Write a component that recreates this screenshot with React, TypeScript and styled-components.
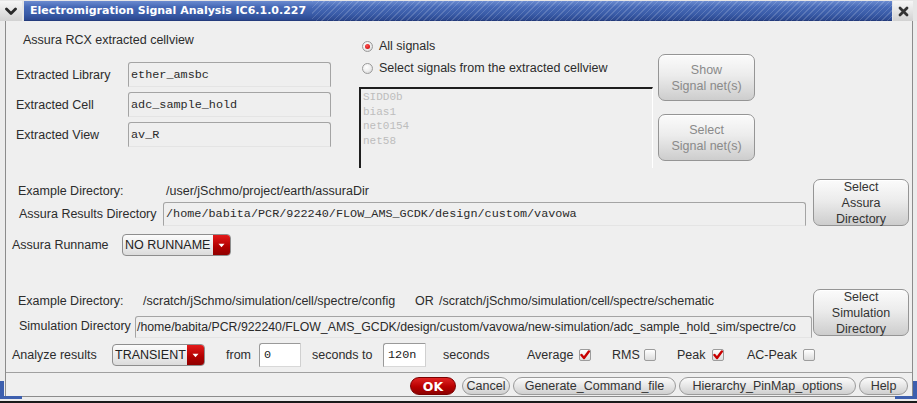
import React from "react";
import styled, { createGlobalStyle } from "styled-components";

const SANS = `"Liberation Sans", Arial, sans-serif`;
const MONO = `"Liberation Mono", "Courier New", monospace`;

const Global = createGlobalStyle`
  html, body { margin: 0; padding: 0; background: #efefef; }
  * { box-sizing: border-box; }
`;

const Window = styled.div`
  position: relative;
  width: 917px;
  height: 403px;
  display: flex;
  flex-direction: column;
  background: #ececec;
  border-bottom: 2px solid #1a1a1a;
  overflow: hidden;
  font-family: ${SANS};
  font-size: 12.5px;
  color: #2c2c2c;
`;

const TitleBar = styled.div`
  flex: none;
  height: 21px;
  display: flex;
  padding-top: 1px;
  background: #e6e6e6;
`;

const WinButton = styled.div<{ $w: number; $ml?: number }>`
  width: ${(p) => p.$w}px;
  height: 20px;
  margin-left: ${(p) => p.$ml ?? 0}px;
  background: linear-gradient(#f6f6f6, #d2d2d2);
  display: flex;
  align-items: center;
  justify-content: center;
`;

const barBg = `linear-gradient(#6b8bd0 0%, #4669b6 30%, #3a5ca8 65%, #2b4890 95%, #1d2f68 100%)`;

const Bar = styled.div`
  flex: 1;
  height: 20px;
  margin-left: 2px;
  display: flex;
  background: repeating-linear-gradient(135deg, rgba(255, 255, 255, 0.16) 0 1px, transparent 1px 4px), ${barBg};
`;

const TitleText = styled.div`
  height: 20px;
  line-height: 20px;
  padding: 0 6px 0 6px;
  background: ${barBg};
  color: #ffffff;
  font-family: "DejaVu Sans", ${SANS};
  font-weight: bold;
  font-size: 11px;
  white-space: nowrap;
`;

const Body = styled.div`
  flex: 1;
  margin: 0 4px 4px 5px;
  border-left: 1px solid #8c8c8c;
  border-right: 1px solid #8c8c8c;
  border-bottom: 1px solid #8c8c8c;
  background: #efefef;
  display: flex;
  flex-direction: column;
  min-height: 0;
`;

const TopSection = styled.div`
  display: flex;
  height: 158px;
  flex: none;
`;

const LeftCol = styled.div`
  width: 353px;
  display: flex;
  flex-direction: column;
`;

const SectionTitle = styled.div`
  margin: 12px 0 0 17px;
  line-height: 14px;
`;

const FieldList = styled.div`
  margin-top: 15px;
  display: flex;
  flex-direction: column;
  gap: 5px;
`;

const Row = styled.div<{ $h: number; $pl: number; $mt?: number }>`
  display: flex;
  align-items: center;
  height: ${(p) => p.$h}px;
  padding-left: ${(p) => p.$pl}px;
  margin-top: ${(p) => p.$mt ?? 0}px;
  flex: none;
  white-space: nowrap;
`;

const Slot = styled.div<{ $w: number }>`
  width: ${(p) => p.$w}px;
  flex: none;
  display: flex;
  align-items: center;
  white-space: nowrap;
`;

const ReadField = styled.div<{ $w: number; $h: number; $mono?: boolean; $self?: string }>`
  width: ${(p) => p.$w}px;
  height: ${(p) => p.$h}px;
  flex: none;
  align-self: ${(p) => p.$self ?? "center"};
  border: 1px solid #a4a4a4;
  border-bottom-color: #e4e4e4;
  border-radius: 3px 3px 0 0;
  background: #efefef;
  padding-left: ${(p) => (p.$mono ? 2 : 1)}px;
  display: flex;
  align-items: center;
  overflow: hidden;
  white-space: nowrap;
  font-family: ${(p) => (p.$mono ? MONO : SANS)};
  font-size: ${(p) => (p.$mono ? "11.8px" : "12.3px")};
  color: #2a2a2a;
`;

const EditField = styled.div<{ $w: number }>`
  width: ${(p) => p.$w}px;
  height: 24px;
  flex: none;
  border: 1px solid #9a9a9a;
  border-right-color: #d0d0d0;
  border-bottom-color: #d8d8d8;
  border-radius: 3px 0 0 0;
  background: #ffffff;
  padding-left: 4px;
  display: flex;
  align-items: center;
  font-family: ${MONO};
  font-size: 11.8px;
  color: #222;
`;

const MiddleCol = styled.div`
  width: 299px;
  padding-top: 15px;
  display: flex;
  flex-direction: column;
  gap: 2px;
`;

const RadioRow = styled.div`
  height: 20px;
  display: flex;
  align-items: center;
  gap: 6px;
  padding-left: 3px;
  white-space: nowrap;
`;

const RadioDot = styled.div<{ $on?: boolean }>`
  width: 11px;
  height: 11px;
  border-radius: 50%;
  border: 1px solid #9a9a9a;
  background: radial-gradient(circle at 40% 35%, #ffffff 0%, #f0f0f0 45%, #cfcfcf 100%);
  display: flex;
  align-items: center;
  justify-content: center;
  &::after {
    content: "";
    display: ${(p) => (p.$on ? "block" : "none")};
    width: 5px;
    height: 5px;
    border-radius: 50%;
    background: radial-gradient(circle at 40% 35%, #ff5050, #c00000);
  }
`;

const ListBox = styled.div`
  margin-top: 7px;
  width: 294px;
  height: 81px;
  border-top: 2px solid #1e1e1e;
  border-left: 2px solid #1e1e1e;
  border-right: 1px solid #ffffff;
  padding: 1px 0 0 2px;
  font-family: ${MONO};
  font-size: 11px;
  line-height: 14.5px;
  color: #bdbdbd;
`;

const RightCol = styled.div`
  padding-top: 33px;
  display: flex;
  flex-direction: column;
  gap: 13px;
`;

const PanelButton = styled.div<{ $disabled?: boolean; $w?: number }>`
  width: ${(p) => p.$w ?? 97}px;
  height: 47px;
  flex: none;
  border: 1px solid #959595;
  border-radius: 7px;
  background: linear-gradient(#fbfbfb 0%, #ececec 45%, #cdcdcd 100%);
  box-shadow: inset 0 1px 0 #ffffff;
  display: flex;
  flex-direction: column;
  align-items: center;
  justify-content: center;
  text-align: center;
  line-height: 16px;
  color: ${(p) => (p.$disabled ? "#8a8a8a" : "#333")};
`;

const DirSection = styled.div<{ $mt: number }>`
  display: flex;
  flex: none;
  margin-top: ${(p) => p.$mt}px;
`;

const DirRows = styled.div`
  flex: 1;
  display: flex;
  flex-direction: column;
`;

const SideButtonWrap = styled.div<{ $ml: number }>`
  margin-left: ${(p) => p.$ml}px;
  margin-right: 3px;
  flex: none;
`;

const Dropdown = styled.div<{ $w: number }>`
  width: ${(p) => p.$w}px;
  height: 22px;
  flex: none;
  display: flex;
  border: 1px solid #8e8e8e;
  border-radius: 4px;
  overflow: hidden;
  background: linear-gradient(#fcfcfc, #dcdcdc);
`;

const DropText = styled.div`
  flex: 1;
  padding-left: 2px;
  line-height: 20px;
  font-size: 12.5px;
  color: #222;
  white-space: nowrap;
`;

const DropArrow = styled.div`
  width: 17px;
  background: linear-gradient(#e41a1a, #b00000 60%, #900000);
  display: flex;
  align-items: center;
  justify-content: center;
`;

const CheckBox = styled.div`
  width: 12px;
  height: 12px;
  border: 1px solid #9c9c9c;
  border-radius: 2px;
  background: linear-gradient(#ffffff, #dcdcdc);
  display: flex;
  align-items: center;
  justify-content: center;
`;

const Footer = styled.div`
  margin-top: auto;
  height: 24px;
  flex: none;
  border-top: 1px solid #a0a0a0;
  padding: 4px 4px 0 0;
  display: flex;
  justify-content: flex-end;
  gap: 3px;
`;

const PillButton = styled.div<{ $w: number; $primary?: boolean; $mr?: number }>`
  width: ${(p) => p.$w}px;
  height: 18px;
  margin-right: ${(p) => p.$mr ?? 0}px;
  border-radius: 9px;
  border: 1px solid ${(p) => (p.$primary ? "#7a0000" : "#9a9a9a")};
  background: ${(p) =>
    p.$primary
      ? "linear-gradient(#e02424, #b80000 55%, #8c0000)"
      : "linear-gradient(#fbfbfb, #e6e6e6 50%, #cfcfcf)"};
  color: ${(p) => (p.$primary ? "#ffffff" : "#333")};
  font-weight: ${(p) => (p.$primary ? "bold" : "normal")};
  font-family: ${(p) => (p.$primary ? `"DejaVu Sans", ${SANS}` : SANS)};
  font-size: 12.5px;
  display: flex;
  align-items: center;
  justify-content: center;
  white-space: nowrap;
`;

const Corner = styled.div<{ $side: "left" | "right" }>`
  position: absolute;
  bottom: 2px;
  ${(p) => p.$side}: 0;
  width: 22px;
  height: 18px;
  border-bottom: 3px solid #3d5fae;
  ${(p) => (p.$side === "left" ? "border-left" : "border-right")}: 4px solid #3d5fae;
  pointer-events: none;
`;

const Check = () => (
  <svg width="10" height="10" viewBox="0 0 10 10">
    <path d="M1.5 5 L4 8 L8.8 1.5" fill="none" stroke="#c80000" strokeWidth="2.4" strokeLinecap="round" strokeLinejoin="round" />
  </svg>
);

const DownTri = () => (
  <svg width="7" height="5" viewBox="0 0 7 5">
    <path d="M0.5 0.8 L6.5 0.8 L3.5 4.3 Z" fill="#ffffff" />
  </svg>
);

export default function App() {
  return (
    <>
      <Global />
      <Window>
        <TitleBar>
          <WinButton $w={22}>
            <svg width="12" height="9" viewBox="0 0 12 9">
              <path d="M1.5 2 L6 6.5 L10.5 2" fill="none" stroke="#2a2a2a" strokeWidth="2.8" strokeLinecap="round" strokeLinejoin="round" />
            </svg>
          </WinButton>
          <Bar>
            <TitleText>Electromigration Signal Analysis IC6.1.0.227</TitleText>
          </Bar>
          <WinButton $w={20} $ml={1}>
            <svg width="11" height="11" viewBox="0 0 11 11">
              <path d="M2 2 L9 9 M9 2 L2 9" stroke="#333" strokeWidth="2.8" strokeLinecap="round" />
            </svg>
          </WinButton>
          <Slot $w={4} />
        </TitleBar>

        <Body>
          <TopSection>
            <LeftCol>
              <SectionTitle>Assura RCX extracted cellview</SectionTitle>
              <FieldList>
                <Row $h={25} $pl={10}>
                  <Slot $w={112}>Extracted Library</Slot>
                  <ReadField $w={203} $h={25} $mono>ether_amsbc</ReadField>
                </Row>
                <Row $h={25} $pl={10}>
                  <Slot $w={112}>Extracted Cell</Slot>
                  <ReadField $w={203} $h={25} $mono>adc_sample_hold</ReadField>
                </Row>
                <Row $h={25} $pl={10}>
                  <Slot $w={112}>Extracted View</Slot>
                  <ReadField $w={203} $h={25} $mono>av_R</ReadField>
                </Row>
              </FieldList>
            </LeftCol>

            <MiddleCol>
              <RadioRow>
                <RadioDot $on />
                All signals
              </RadioRow>
              <RadioRow>
                <RadioDot />
                Select signals from the extracted cellview
              </RadioRow>
              <ListBox>
                <div>SIDD0b</div>
                <div>bias1</div>
                <div>net0154</div>
                <div>net58</div>
              </ListBox>
            </MiddleCol>

            <RightCol>
              <PanelButton $disabled>
                <span>Show</span>
                <span>Signal net(s)</span>
              </PanelButton>
              <PanelButton $disabled>
                <span>Select</span>
                <span>Signal net(s)</span>
              </PanelButton>
            </RightCol>
          </TopSection>

          <DirSection $mt={0}>
            <DirRows>
              <Row $h={23} $pl={12}>
                <Slot $w={148}>Example Directory:</Slot>
                <span>/user/jSchmo/project/earth/assuraDir</span>
              </Row>
              <Row $h={24} $pl={13}>
                <Slot $w={144}>Assura Results Directory</Slot>
                <ReadField $w={643} $h={24} $mono>
                  /home/babita/PCR/922240/FLOW_AMS_GCDK/design/custom/vavowa
                </ReadField>
              </Row>
            </DirRows>
            <SideButtonWrap $ml={7}>
              <PanelButton $w={96}>
                <span>Select</span>
                <span>Assura</span>
                <span>Directory</span>
              </PanelButton>
            </SideButtonWrap>
          </DirSection>

          <Row $h={22} $pl={6} $mt={8}>
            <Slot $w={110}>Assura Runname</Slot>
            <Dropdown $w={109}>
              <DropText>NO RUNNAME</DropText>
              <DropArrow>
                <DownTri />
              </DropArrow>
            </Dropdown>
          </Row>

          <DirSection $mt={33}>
            <DirRows>
              <Row $h={24} $pl={12}>
                <Slot $w={125}>Example Directory:</Slot>
                <Slot $w={272}>/scratch/jSchmo/simulation/cell/spectre/config</Slot>
                <Slot $w={24}>OR</Slot>
                <span>/scratch/jSchmo/simulation/cell/spectre/schematic</span>
              </Row>
              <Row $h={25} $pl={13}>
                <Slot $w={116}>Simulation Directory</Slot>
                <ReadField $w={677} $h={22} $self="flex-end">
                  /home/babita/PCR/922240/FLOW_AMS_GCDK/design/custom/vavowa/new-simulation/adc_sample_hold_sim/spectre/co
                </ReadField>
              </Row>
            </DirRows>
            <SideButtonWrap $ml={1}>
              <PanelButton $w={96}>
                <span>Select</span>
                <span>Simulation</span>
                <span>Directory</span>
              </PanelButton>
            </SideButtonWrap>
          </DirSection>

          <Row $h={24} $pl={6} $mt={5}>
            <Slot $w={100}>Analyze results</Slot>
            <Slot $w={114}>
              <Dropdown $w={93}>
                <DropText>TRANSIENT</DropText>
                <DropArrow>
                  <DownTri />
                </DropArrow>
              </Dropdown>
            </Slot>
            <Slot $w={33}>from</Slot>
            <Slot $w={53}>
              <EditField $w={42}>0</EditField>
            </Slot>
            <Slot $w={71}>seconds to</Slot>
            <Slot $w={60}>
              <EditField $w={43}>120n</EditField>
            </Slot>
            <Slot $w={84}>seconds</Slot>
            <Slot $w={52}>Average</Slot>
            <Slot $w={33}>
              <CheckBox>
                <Check />
              </CheckBox>
            </Slot>
            <Slot $w={32}>RMS</Slot>
            <Slot $w={33}>
              <CheckBox />
            </Slot>
            <Slot $w={35}>Peak</Slot>
            <Slot $w={35}>
              <CheckBox>
                <Check />
              </CheckBox>
            </Slot>
            <Slot $w={56}>AC-Peak</Slot>
            <Slot $w={14}>
              <CheckBox />
            </Slot>
          </Row>

          <Footer>
            <PillButton $w={46} $primary $mr={3}>OK</PillButton>
            <PillButton $w={48}>Cancel</PillButton>
            <PillButton $w={163}>Generate_Command_file</PillButton>
            <PillButton $w={177}>Hierarchy_PinMap_options</PillButton>
            <PillButton $w={49}>Help</PillButton>
          </Footer>
        </Body>
        <Corner $side="left" />
        <Corner $side="right" />
      </Window>
    </>
  );
}
